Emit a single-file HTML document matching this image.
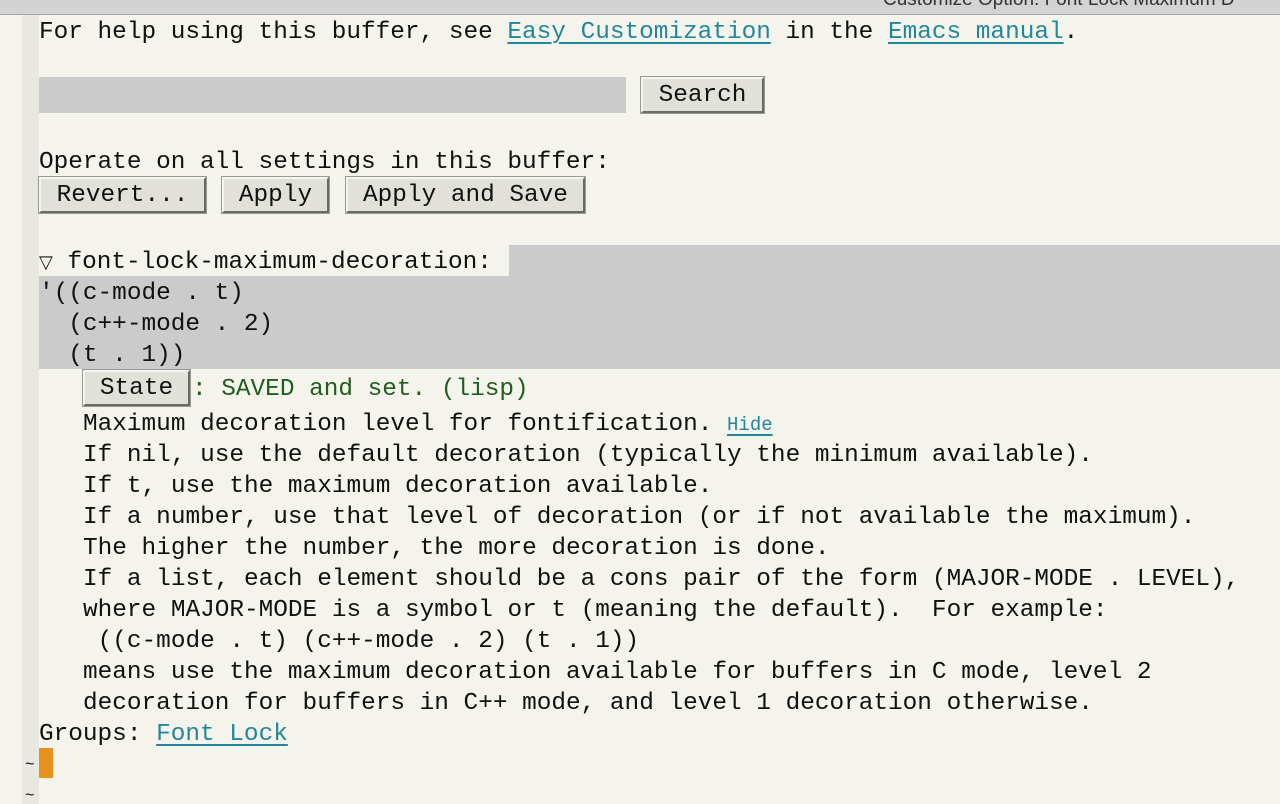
<!DOCTYPE html>
<html><head><meta charset="utf-8"><style>
html,body{margin:0;padding:0;width:1280px;height:804px;overflow:hidden;background:#f5f4ec;}
body{position:relative;font-family:"Liberation Mono",monospace;font-size:24.4px;color:#111;}
.l{position:absolute;white-space:pre;line-height:31px;height:31px;margin-top:2px;}
a{color:#23879a;text-decoration:underline;text-decoration-thickness:2px;text-underline-offset:4px;}
.btn{position:absolute;height:32px;line-height:32px;background:#e2e1d9;border:2px solid;border-color:#f4f4f0 #6a6a64 #6a6a64 #f4f4f0;box-shadow:0 0 0 1px #9a9a94;box-sizing:border-box;white-space:pre;text-align:center;}
.g{color:#1e5e1e;}
</style></head><body>
<div style="position:absolute;left:0;top:0;width:1280px;height:14px;background:#d3d3d3;border-bottom:1px solid #a8a8a8;overflow:hidden;">
<div style="position:absolute;left:883px;top:-11px;font-family:'Liberation Sans',sans-serif;font-size:19px;color:#333;white-space:pre;">Customize Option: Font Lock Maximum D</div></div>
<div style="position:absolute;left:22px;top:15px;width:17px;height:789px;background:#e8e7e0;"></div>

<div class="l" style="left:39px;top:15px">For help using this buffer, see <a>Easy Customization</a> in the <a>Emacs manual</a>.</div>
<div style="position:absolute;left:39px;top:77px;width:587px;height:36px;background:#cbcbcb;"></div>
<div class="btn" style="left:641px;top:77px;width:123px;height:36px;line-height:34px;">Search</div>
<div class="l" style="left:39px;top:145px">Operate on all settings in this buffer:</div>
<div class="btn" style="left:39px;top:177px;width:167px;height:36px;line-height:34px;">Revert...</div>
<div class="btn" style="left:222px;top:177px;width:107px;height:36px;line-height:34px;">Apply</div>
<div class="btn" style="left:346px;top:177px;width:239px;height:36px;line-height:34px;">Apply and Save</div>

<div style="position:absolute;left:509px;top:245px;width:771px;height:31px;background:#cbcbcb;"></div>
<div style="position:absolute;left:39px;top:276px;width:1241px;height:93px;background:#cbcbcb;"></div>
<div class="l" style="left:39px;top:245px"><span style="font-size:18px">▽</span> font-lock-maximum-decoration:</div>
<div class="l" style="left:39px;top:276px">'((c-mode . t)</div>
<div class="l" style="left:39px;top:307px">  (c++-mode . 2)</div>
<div class="l" style="left:39px;top:338px">  (t . 1))</div>
<div class="btn" style="left:83px;top:370px;width:107px;height:36px;line-height:34px;">State</div>
<div class="l g" style="left:192px;top:372px">: SAVED and set. (lisp)</div>
<div class="l" style="left:83px;top:407px">Maximum decoration level for fontification. <a style="font-size:19px">Hide</a></div>
<div class="l" style="left:83px;top:438px">If nil, use the default decoration (typically the minimum available).</div>
<div class="l" style="left:83px;top:469px">If t, use the maximum decoration available.</div>
<div class="l" style="left:83px;top:500px">If a number, use that level of decoration (or if not available the maximum).</div>
<div class="l" style="left:83px;top:531px">The higher the number, the more decoration is done.</div>
<div class="l" style="left:83px;top:562px">If a list, each element should be a cons pair of the form (MAJOR-MODE . LEVEL),</div>
<div class="l" style="left:83px;top:593px">where MAJOR-MODE is a symbol or t (meaning the default).  For example:</div>
<div class="l" style="left:83px;top:624px"> ((c-mode . t) (c++-mode . 2) (t . 1))</div>
<div class="l" style="left:83px;top:655px">means use the maximum decoration available for buffers in C mode, level 2</div>
<div class="l" style="left:83px;top:686px">decoration for buffers in C++ mode, and level 1 decoration otherwise.</div>
<div class="l" style="left:39px;top:717px">Groups: <a>Font Lock</a></div>
<div style="position:absolute;left:39px;top:748px;width:14px;height:30px;background:#e8921e;"></div>
<div class="l" style="left:25px;top:748px;font-size:16px">~</div>
<div class="l" style="left:25px;top:779px;font-size:16px">~</div>
</body></html>
